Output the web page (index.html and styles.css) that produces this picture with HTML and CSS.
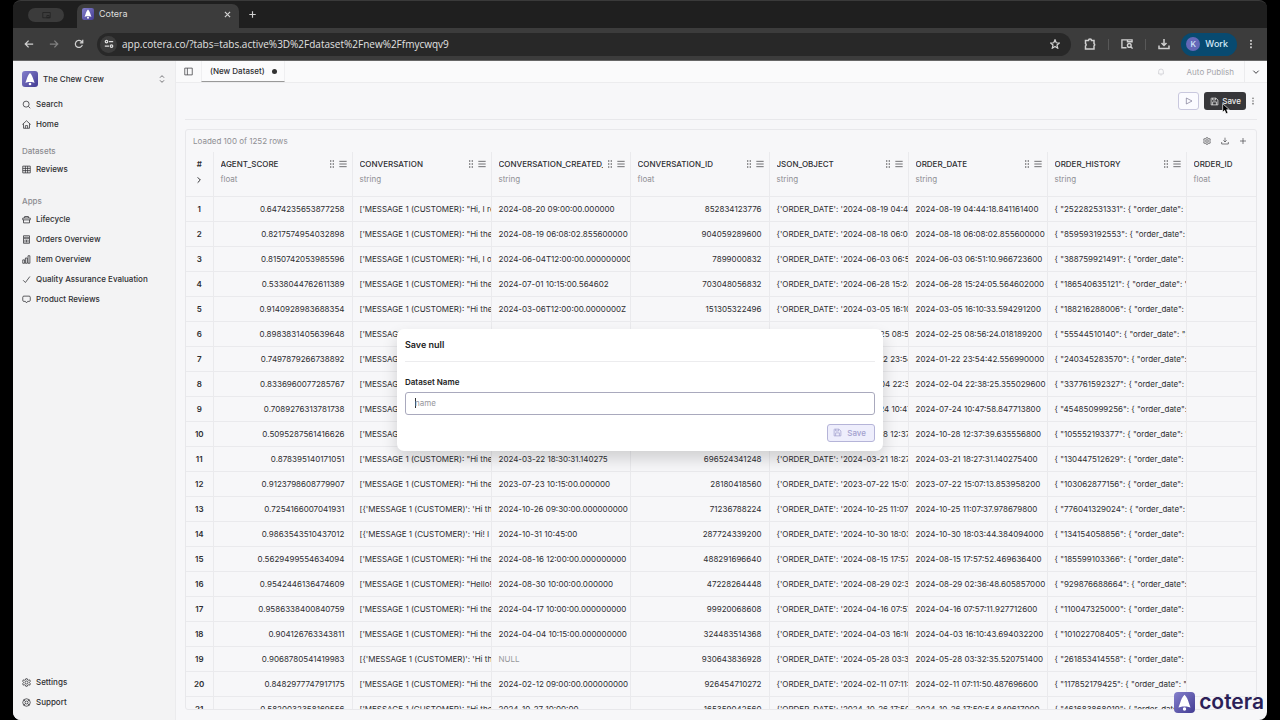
FILE: index.html
```
<!DOCTYPE html>
<html lang="en">
<head>
    <meta charset="UTF-8">
    <title>Cotera</title>
    <link rel="stylesheet" href="styles.css">
</head>
<body>
<svg class="sprite" aria-hidden="true">
    <linearGradient id="purple" x1="0" y1="0" x2="1" y2="1">
        <stop offset="0" stop-color="#8580cc"/>
        <stop offset="1" stop-color="#433c93"/>
    </linearGradient>
    <symbol id="logo" viewBox="0 0 16 16">
        <rect width="16" height="16" rx="3" fill="url(#purple)"/>
        <path d="M8 2C6.400 3.600 5.200 6 4.600 8.600L3.400 11.800l3-.8h3.200l3 .8L11.400 8.600C10.800 6 9.600 3.600 8 2z" fill="#fff"/>
        <circle cx="8" cy="13" r="1.300" fill="#fff"/>
    </symbol>
    <symbol id="save" viewBox="0 0 24 24">
        <path d="M4 3h12l5 5v13H3V4a1 1 0 0 1 1-1zM7 3v5h8V3M7 21v-8h10v8"/>
    </symbol>
    <symbol id="gear" viewBox="0 0 24 24">
        <path d="M10 2h4l1 3 3 1 3-1 1 4-2 3 2 3-1 4-3-1-3 1-1 3h-4l-1-3-3-1-3 1-1-4 2-3-2-3 1-4 3 1 3-1z"/>
        <circle cx="12" cy="12" r="4"/>
    </symbol>
    <symbol id="download" viewBox="0 0 24 24">
        <path d="M12 2v13M7 10l5 5 5-5M2 15v6h20v-6"/>
    </symbol>
    <symbol id="dots" viewBox="0 0 24 24">
        <g fill="currentColor" stroke="none">
            <circle cx="12" cy="4" r="2.500"/><circle cx="12" cy="12" r="2.500"/><circle cx="12" cy="20" r="2.500"/>
        </g>
    </symbol>
    <symbol id="grip" viewBox="0 0 24 24">
        <path d="M6 3h4M14 3h4M6 12h4M14 12h4M6 21h4M14 21h4" stroke-width="3"/>
    </symbol>
    <symbol id="menu" viewBox="0 0 24 24">
        <path d="M1 4h22M1 12h22M1 20h22"/>
    </symbol>
</svg>

<div class="window">
    <div class="tab-strip">
        <span class="window-pill">
            <svg class="icon" viewBox="0 0 24 24"><path d="M2 4h20v14H2zM13 12h6v6h-6z"/></svg>
        </span>
        <div class="browser-tab">
            <svg class="tab-logo"><use href="#logo"/></svg>
            <span class="tab-title">Cotera</span>
            <button class="chrome-button" aria-label="Close tab">
                <svg class="icon" viewBox="0 0 24 24"><path d="M3 3l18 18M21 3L3 21"/></svg>
            </button>
        </div>
        <button class="chrome-button new-tab" aria-label="New tab">
            <svg class="icon" viewBox="0 0 24 24"><path d="M12 1v22M1 12h22"/></svg>
        </button>
    </div>

    <div class="address-bar">
        <button class="chrome-button" aria-label="Back">
            <svg class="icon" viewBox="0 0 24 24"><path d="M22 12H3M11 4l-8 8 8 8"/></svg>
        </button>
        <button class="chrome-button dim" aria-label="Forward">
            <svg class="icon" viewBox="0 0 24 24"><path d="M2 12h19M13 4l8 8-8 8"/></svg>
        </button>
        <button class="chrome-button" aria-label="Reload">
            <svg class="icon" viewBox="0 0 24 24"><path d="M20 14a8.500 8.500 0 1 1-2-8l3 3M21 2v7h-7"/></svg>
        </button>
        <div class="url">
            <span class="site-info">
                <svg class="icon" viewBox="0 0 24 24"><circle cx="6" cy="6" r="3"/><circle cx="18" cy="17" r="3"/><path d="M12 6h10M2 17h10"/></svg>
            </span>
            <span class="url-text">app.cotera.co/?tabs=tabs.active%3D%2Fdataset%2Fnew%2Ffmycwqv9</span>
            <button class="chrome-button" aria-label="Bookmark">
                <svg class="icon" viewBox="0 0 24 24"><path d="M12 2l3 7 7.500.6-5.700 5 1.700 7.400-6.500-4-6.500 4 1.700-7.400-5.700-5L9 9z"/></svg>
            </button>
        </div>
        <div class="extensions">
            <button class="chrome-button" aria-label="Extensions">
                <svg class="icon wide" viewBox="0 0 24 24"><path d="M3 5h6a3 3 0 0 1 6 0h5v6a3 3 0 0 1 0 5v6H3v-6a3 3 0 0 0 0-5z"/></svg>
            </button>
            <span class="divider"></span>
            <button class="chrome-button" aria-label="Search tabs">
                <svg class="icon wide" viewBox="0 0 26 24"><path d="M12 20H2V3h22v6M14 4v3h9"/><circle cx="18" cy="15" r="4"/><path d="M21 18l4 4"/></svg>
            </button>
            <span class="divider"></span>
            <button class="chrome-button" aria-label="Downloads">
                <svg class="icon wide"><use href="#download"/></svg>
            </button>
        </div>
        <button class="profile"><span class="avatar">K</span>Work</button>
        <button class="chrome-button" aria-label="More">
            <svg class="icon"><use href="#dots"/></svg>
        </button>
    </div>

    <div class="page">
        <nav class="sidebar">
            <button class="workspace">
                <svg class="workspace-logo"><use href="#logo"/></svg>
                <span>The Chew Crew</span>
                <svg class="icon small" viewBox="0 0 24 24"><path d="M6 8l6-6 6 6M6 16l6 6 6-6"/></svg>
            </button>
            <a class="nav-item" href="#">
                <svg class="icon" viewBox="0 0 24 24"><circle cx="11" cy="11" r="8"/><path d="M17 17l5 5"/></svg>Search
            </a>
            <a class="nav-item" href="#">
                <svg class="icon" viewBox="0 0 24 24"><path d="M1 12L12 2l11 10M4 10v12h16V10M9 22v-7h6v7"/></svg>Home
            </a>
            <div class="nav-title">Datasets</div>
            <a class="nav-item" href="#">
                <svg class="icon" viewBox="0 0 24 24"><path d="M2 3h20v18H2zM2 9h20M2 15h20M9 3v18M15 3v18"/></svg>Reviews
            </a>
            <div class="nav-title apps">Apps</div>
            <a class="nav-item" href="#">
                <svg class="icon" viewBox="0 0 24 24"><path d="M2 8h20v5H2zM4 13v8h16v-8M7 8V4h10v4"/></svg>Lifecycle
            </a>
            <a class="nav-item" href="#">
                <svg class="icon" viewBox="0 0 24 24"><path d="M4 2h16v20H4zM7 6h10v4H7zM8 13v7M12 13v7M16 13v7"/></svg>Orders Overview
            </a>
            <a class="nav-item" href="#">
                <svg class="icon" viewBox="0 0 24 24"><path d="M2 13h5v9H2zM9 8h5v14H9zM16 2h5v20h-5z"/></svg>Item Overview
            </a>
            <a class="nav-item" href="#">
                <svg class="icon" viewBox="0 0 24 24"><path d="M3 14l6 6L21 4"/></svg>Quality Assurance Evaluation
            </a>
            <a class="nav-item" href="#">
                <svg class="icon" viewBox="0 0 24 24"><path d="M5 3h14a3 3 0 0 1 3 3v8a3 3 0 0 1-3 3h-4l-3 4-3-4H5a3 3 0 0 1-3-3V6a3 3 0 0 1 3-3z"/></svg>Product Reviews
            </a>
            <div class="nav-footer">
                <a class="nav-item" href="#"><svg class="icon"><use href="#gear"/></svg>Settings</a>
                <a class="nav-item" href="#">
                    <svg class="icon" viewBox="0 0 24 24"><circle cx="12" cy="12" r="10"/><circle cx="12" cy="12" r="4"/><path d="M5 5l4 4M19 5l-4 4M5 19l4-4M19 19l-4-4"/></svg>Support
                </a>
            </div>
        </nav>

        <main class="content">
            <div class="doc-bar">
                <button class="icon-button toggle" aria-label="Toggle sidebar">
                    <svg class="icon" viewBox="0 0 24 24"><path d="M2 3h20v18H2zM9 3v18"/></svg>
                </button>
                <button class="doc-tab">(New Dataset)<span class="unsaved"></span></button>
                <div class="publish">
                    <svg class="icon small" viewBox="0 0 24 24"><path d="M5 18V10a7 7 0 0 1 14 0v8zM10 21h4"/></svg>
                    <button class="publish-button" disabled>Auto Publish</button>
                    <button class="icon-button publish-menu" aria-label="Publish options">
                        <svg class="icon small" viewBox="0 0 24 24"><path d="M4 8l8 8 8-8" stroke-width="3"/></svg>
                    </button>
                </div>
            </div>

            <div class="actions">
                <button class="run-button" aria-label="Run">
                    <svg class="icon small" viewBox="0 0 24 24"><path d="M4 3l17 9-17 9z"/></svg>
                </button>
                <button class="save-button">
                    <svg class="icon"><use href="#save"/></svg>Save
                    <svg class="pointer" viewBox="0 0 12 18"><path d="M1 1v13l3-3 2 5 3-1-2-5h4z"/></svg>
                </button>
                <button class="icon-button" aria-label="More actions">
                    <svg class="icon small"><use href="#dots"/></svg>
                </button>
            </div>

            <section class="panel">
                <div class="panel-bar">
                    <span class="row-count">Loaded 100 of 1252 rows</span>
                    <button class="icon-button" aria-label="Settings"><svg class="icon small"><use href="#gear"/></svg></button>
                    <button class="icon-button" aria-label="Download"><svg class="icon small"><use href="#download"/></svg></button>
                    <button class="icon-button" aria-label="Add column">
                        <svg class="icon small" viewBox="0 0 24 24"><path d="M12 3v18M3 12h18"/></svg>
                    </button>
                </div>
                <table>
                    <thead><tr id="columns"></tr></thead>
                    <tbody id="rows"></tbody>
                </table>
            </section>
        </main>

        <div class="overlay">
            <form class="dialog">
                <h2 class="dialog-title">Save null</h2>
                <label class="field-label" for="dataset-name">Dataset Name</label>
                <input class="field" id="dataset-name" type="text" placeholder="name">
                <button class="dialog-save" type="submit" disabled><svg class="icon"><use href="#save"/></svg>Save</button>
            </form>
        </div>

        <div class="brand"><svg class="brand-logo"><use href="#logo"/></svg>cotera</div>
    </div>
</div>
<script src="script.js"></script>
</body>
</html>
```
FILE: styles.css
```
* {
    box-sizing: border-box;
}
body {
    margin: 0;
    background: #000;
    font-family: Inter, "Liberation Sans", sans-serif;
    font-size: 8px;
    line-height: 12px;
    color: #2e2e31;
}
button, input {
    font: inherit;
    color: inherit;
}
button {
    display: flex;
    align-items: center;
    padding: 0;
    border: none;
    background: none;
}
a {
    color: inherit;
    text-decoration: none;
}

/* icons */
.sprite {
    position: absolute;
    width: 0;
    height: 0;
}
.icon {
    flex: none;
    width: 9px;
    height: 9px;
    fill: none;
    stroke: currentColor;
    stroke-width: 2;
}
.icon.small {
    width: 8px;
    height: 8px;
}

/* browser */
.window {
    display: flex;
    flex-direction: column;
    height: 100vh;
    margin: 0 13px;
    border-top: 1px solid #3a3a3a;
    border-radius: 8px;
    overflow: hidden;
    background: #1f1f1f;
}
.tab-strip {
    display: flex;
    align-items: flex-end;
    height: 27px;
    padding-left: 15px;
}
.window-pill {
    display: flex;
    align-items: center;
    justify-content: center;
    width: 36px;
    height: 14px;
    margin-bottom: 6px;
    border-radius: 7px;
    background: #3b3b3b;
    color: #222;
}
.browser-tab {
    display: flex;
    align-items: center;
    gap: 5px;
    width: 162px;
    height: 24px;
    margin-left: 13px;
    padding: 0 8px 4px 5px;
    border-radius: 7px 7px 0 0;
    background: #3c3c3c;
    color: #dedede;
}
.tab-logo {
    width: 12px;
    height: 12px;
}
.tab-title {
    flex: 1;
    font-size: 9px;
}
.chrome-button {
    color: #d0d0d0;
}
.chrome-button.dim {
    color: #808080;
}
.browser-tab .icon,
.new-tab .icon {
    width: 7px;
    height: 7px;
    stroke-width: 4;
}
.new-tab {
    height: 27px;
    margin-left: 10px;
}
.address-bar {
    display: flex;
    align-items: center;
    gap: 15px;
    height: 33px;
    padding: 0 11px;
    border-bottom: 1px solid #666;
    background: #3c3c3c;
}
.address-bar .icon {
    width: 10px;
    height: 10px;
    stroke-width: 3;
}
.address-bar .icon.wide {
    width: 12px;
    height: 12px;
}
.url {
    display: flex;
    flex: 1;
    align-items: center;
    gap: 5px;
    height: 23px;
    margin: 0 -2px;
    padding: 0 11px 0 3px;
    border-radius: 12px;
    background: #282828;
}
.site-info {
    display: flex;
    align-items: center;
    justify-content: center;
    width: 17px;
    height: 17px;
    border-radius: 50%;
    background: #3c3c3c;
    color: #ddd;
}
.url-text {
    flex: 1;
    font-family: "Open Sans", sans-serif;
    font-size: 10px;
    font-weight: 500;
    color: #e2e2e2;
}
.extensions {
    display: flex;
    align-items: center;
    gap: 12px;
}
.divider {
    width: 1px;
    height: 11px;
    background: #585858;
}
.profile {
    gap: 5px;
    height: 23px;
    margin: 0 -6px 0 -4px;
    padding: 0 9px 0 5px;
    border-radius: 12px;
    background: #084a70;
    color: #d3e9f8;
    font-size: 9px;
    font-weight: 500;
}
.avatar {
    width: 14px;
    height: 14px;
    border-radius: 50%;
    background: #6468b8;
    font-size: 8px;
    line-height: 14px;
    text-align: center;
}

/* page */
.page {
    position: relative;
    display: flex;
    flex: 1;
    min-height: 0;
    background: #f7f7f9;
}
.sidebar {
    display: flex;
    flex-direction: column;
    flex: none;
    width: 163px;
    padding: 7px 9px 8px;
    border-right: 1px solid #ebebed;
    background: #f3f3f4;
    font-weight: 500;
}
.workspace {
    gap: 5px;
    height: 22px;
    margin-bottom: 4px;
    text-align: left;
}
.workspace span {
    flex: 1;
}
.workspace-logo {
    width: 16px;
    height: 16px;
}
.nav-item {
    display: flex;
    align-items: center;
    gap: 5px;
    height: 20px;
    white-space: nowrap;
}
.nav-title {
    height: 14px;
    margin-top: 11px;
    color: #8b8b90;
}
.nav-title.apps {
    margin-top: 16px;
}
.nav-footer {
    margin-top: auto;
}
.content {
    display: flex;
    flex-direction: column;
    flex: 1;
    min-width: 0;
}
.doc-bar {
    display: flex;
    flex: none;
    height: 22px;
    padding-left: 8px;
    border-bottom: 1px solid #ececee;
    background: #fafafb;
}
.doc-tab {
    gap: 7px;
    margin-left: 8px;
    padding: 0 7px 0 8px;
    border: 1px solid #efeff1;
    border-width: 0 1px 1px;
    border-bottom-color: #999;
    background: #fbfbfc;
    font-weight: 500;
}
.unsaved {
    width: 5px;
    height: 5px;
    border-radius: 50%;
    background: #333;
}
.publish {
    display: flex;
    align-items: center;
    margin-left: auto;
    color: #c6c6cb;
}
.publish-button {
    height: 21px;
    margin-left: 14px;
    padding: 0 10px 0 8px;
    color: #a5a5aa;
}
.publish-menu {
    height: 21px;
    padding: 0 7px;
    border-left: 1px solid #ececee;
}
.icon-button {
    color: #3f3f43;
}
.actions {
    display: flex;
    flex: none;
    align-items: center;
    justify-content: flex-end;
    gap: 5px;
    height: 37px;
    margin: 0 10px 0 9px;
    border-bottom: 1px solid #e8e8eb;
}
.actions > .icon-button {
    width: 8px;
    margin-left: -2px;
    color: #777;
}
.run-button {
    justify-content: center;
    width: 21px;
    height: 18px;
    border: 1px solid #c9c8de;
    border-radius: 3px;
    background: #fbfbff;
    color: #77738f;
}
.save-button {
    position: relative;
    gap: 3px;
    height: 18px;
    padding: 0 5px 0 6px;
    border-radius: 3px;
    background: #37373a;
    color: #ededed;
    font-weight: 500;
}
.pointer {
    position: absolute;
    top: 11px;
    left: 18px;
    width: 8px;
    height: 12px;
    fill: #000;
    stroke: #fff;
    stroke-width: 1;
}

/* data table */
.panel {
    flex: 1;
    min-height: 0;
    margin: 9px 10px 10px 9px;
    border: 1px solid #e8e8eb;
    border-radius: 3px;
    overflow: hidden;
}
.panel-bar {
    display: flex;
    align-items: center;
    gap: 10px;
    height: 22px;
    padding: 0 9px 0 7px;
}
.row-count {
    flex: 1;
    color: #8f8f94;
}
table {
    width: 100%;
    table-layout: fixed;
    border-collapse: collapse;
}
th, td {
    padding: 0 0 0 7px;
    border-right: 1px solid #eaeaed;
    border-bottom: 1px solid #eaeaed;
    overflow: hidden;
    white-space: nowrap;
    text-align: left;
}
th {
    width: 139px;
    height: 44px;
    padding-top: 6px;
    font-weight: 500;
    vertical-align: top;
}
th.index, td.index {
    width: 27px;
    padding-left: 0;
    text-align: center;
    font-weight: 600;
}
th.index .icon {
    margin-top: 6px;
}
td {
    height: 25px;
}
td.number {
    padding-right: 7px;
    text-align: right;
}
.column-head {
    display: flex;
    align-items: center;
    gap: 3px;
    padding-right: 5px;
}
.column-name {
    flex: 1;
    overflow: hidden;
}
.column-type {
    margin-top: 3px;
    color: #8f8f94;
    font-weight: 400;
}
td.null {
    color: #97979c;
}

/* save dialog */
.overlay {
    position: absolute;
    inset: 0;
    display: flex;
    align-items: center;
    justify-content: center;
    padding-bottom: 2px;
}
.dialog {
    display: flex;
    flex-direction: column;
    width: 486px;
    padding: 9px 8px;
    border-radius: 7px;
    background: #fff;
    box-shadow: 0 8px 16px rgba(0, 0, 0, 0.16);
}
.dialog-title {
    margin: 0 0 14px;
    padding: 1px 0 10px;
    border-bottom: 1px solid #ececee;
    font-size: 9px;
    font-weight: 600;
    color: #222;
}
.field-label {
    margin-bottom: 4px;
    font-weight: 600;
    color: #222;
}
.field {
    height: 23px;
    padding: 0 9px;
    border: 1px solid #a9a9bd;
    border-radius: 3px;
    outline: none;
    background: #fff linear-gradient(#333, #333) no-repeat 9px center / 1px 10px;
}
.field::placeholder {
    color: #97979c;
}
.dialog-save {
    gap: 5px;
    align-self: flex-end;
    height: 18px;
    margin-top: 9px;
    padding: 0 8px 0 5px;
    border: 1px solid #b5b4d8;
    border-radius: 3px;
    background: #eeeefc;
    color: #a3a1cf;
    font-weight: 500;
}

.brand {
    position: absolute;
    right: 3px;
    bottom: 6px;
    display: flex;
    align-items: center;
    gap: 4px;
    font-size: 21px;
    line-height: 24px;
    font-weight: 600;
    color: #2b1f57;
}
.brand-logo {
    width: 21px;
    height: 21px;
}
```
FILE: script.js
```
const columns = [
    ['AGENT_SCORE', 'float'],
    ['CONVERSATION', 'string'],
    ['CONVERSATION_CREATED_AT', 'string'],
    ['CONVERSATION_ID', 'float'],
    ['JSON_OBJECT', 'string'],
    ['ORDER_DATE', 'string'],
    ['ORDER_HISTORY', 'string'],
    ['ORDER_ID', 'float']
];

// score, conversation, created at, conversation id, order date, order history
const rows = [
    ['0.6474235653877258', `['MESSAGE 1 (CUSTOMER): "Hi, I re`, '2024-08-20 09:00:00.000000', '852834123776', '2024-08-19 04:44:18.841161400', '252282531331'],
    ['0.8217574954032898', `['MESSAGE 1 (CUSTOMER): "Hi there`, '2024-08-19 06:08:02.855600000', '904059289600', '2024-08-18 06:08:02.855600000', '859593192553'],
    ['0.8150742053985596', `['MESSAGE 1 (CUSTOMER): "Hi, I or`, '2024-06-04T12:00:00.000000000', '7899000832', '2024-06-03 06:51:10.966723600', '388759921491'],
    ['0.5338044762611389', `['MESSAGE 1 (CUSTOMER): "Hi there`, '2024-07-01 10:15:00.564602', '703048056832', '2024-06-28 15:24:05.564602000', '186540635121'],
    ['0.9140928983688354', `['MESSAGE 1 (CUSTOMER): "Hi there`, '2024-03-06T12:00:00.0000000Z', '151305322496', '2024-03-05 16:10:33.594291200', '188216288006'],
    ['0.8983831405639648', `['MESSAGE 1 (CUSTOMER): "Hi there`, '', '', '2024-02-25 08:56:24.018189200', '55544510140'],
    ['0.7497879266738892', `['MESSAGE 1 (CUSTOMER): "Hi there`, '', '', '2024-01-22 23:54:42.556990000', '240345283570'],
    ['0.8336960077285767', `['MESSAGE 1 (CUSTOMER): "Hi there`, '', '', '2024-02-04 22:38:25.355029600', '337761592327'],
    ['0.7089276313781738', `['MESSAGE 1 (CUSTOMER): "Hi there`, '', '', '2024-07-24 10:47:58.847713800', '454850999256'],
    ['0.5095287561416626', `['MESSAGE 1 (CUSTOMER): "Hi there`, '', '', '2024-10-28 12:37:39.635556800', '105552193377'],
    ['0.878395140171051', `['MESSAGE 1 (CUSTOMER): "Hi there`, '2024-03-22 18:30:31.140275', '696524341248', '2024-03-21 18:27:31.140275400', '130447512629'],
    ['0.9123798608779907', `['MESSAGE 1 (CUSTOMER): "Hi there`, '2023-07-23 10:15:00.000000', '28180418560', '2023-07-22 15:07:13.853958200', '103062877156'],
    ['0.7254166007041931', `[{'MESSAGE 1 (CUSTOMER)': 'Hi there`, '2024-10-26 09:30:00.000000000', '71236788224', '2024-10-25 11:07:37.978679800', '776041329024'],
    ['0.9863543510437012', `[{'MESSAGE 1 (CUSTOMER)': 'Hi! I re`, '2024-10-31 10:45:00', '287724339200', '2024-10-30 18:03:44.384094000', '134154058856'],
    ['0.5629499554634094', `['MESSAGE 1 (CUSTOMER): "Hi there`, '2024-08-16 12:00:00.000000000', '488291696640', '2024-08-15 17:57:52.469636400', '185599103366'],
    ['0.9542446136474609', `['MESSAGE 1 (CUSTOMER): "Hello! `, '2024-08-30 10:00:00.000000', '47228264448', '2024-08-29 02:36:48.605857000', '929876688664'],
    ['0.9586338400840759', `['MESSAGE 1 (CUSTOMER): "Hi there`, '2024-04-17 10:00:00.000000000', '99920068608', '2024-04-16 07:57:11.927712600', '110047325000'],
    ['0.904126763343811', `['MESSAGE 1 (CUSTOMER): "Hi there`, '2024-04-04 10:15:00.000000000', '324483514368', '2024-04-03 16:10:43.694032200', '101022708405'],
    ['0.9068780541419983', `[{'MESSAGE 1 (CUSTOMER)': 'Hi there`, 'NULL', '930643836928', '2024-05-28 03:32:35.520751400', '261853414558'],
    ['0.8482977747917175', `['MESSAGE 1 (CUSTOMER): "Hi there`, '2024-02-12 09:00:00.000000000', '926454710272', '2024-02-11 07:11:50.487696600', '117852179425'],
    ['0.5820032358169556', `['MESSAGE 1 (CUSTOMER): "Hi there`, '2024-10-27 10:00:00', '165359042560', '2024-10-26 17:50:54.849617000', '461683868019']
];

document.getElementById('columns').innerHTML = `
    <th class="index">#<br><svg class="icon small" viewBox="0 0 24 24"><path d="M8 4l8 8-8 8" stroke-width="3"/></svg></th>
` + columns.map(([name, type]) => `
    <th>
        <div class="column-head">
            <span class="column-name">${name}</span>
            <svg class="icon small"><use href="#grip"/></svg>
            <svg class="icon small"><use href="#menu"/></svg>
        </div>
        <div class="column-type">${type}</div>
    </th>
`).join('');

document.getElementById('rows').innerHTML = rows.map(([score, talk, created, id, date, history], i) => `
    <tr>
        <td class="index">${i + 1}</td>
        <td class="number">${score}</td>
        <td>${talk}</td>
        <td class="${created === 'NULL' ? 'null' : ''}">${created}</td>
        <td class="number">${id}</td>
        <td>{'ORDER_DATE': '${date}'</td>
        <td>${date}</td>
        <td>{ "${history}": { "order_date": "2024</td>
        <td></td>
    </tr>
`).join('');
```
